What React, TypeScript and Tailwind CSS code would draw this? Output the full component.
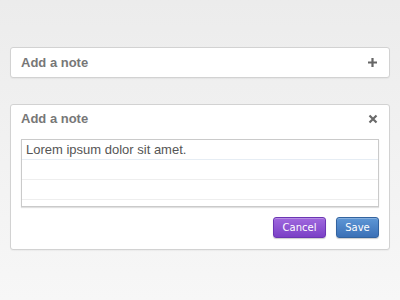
const lines = ["Lorem ipsum dolor sit amet.", "", ""];

function PlusIcon() {
  return (
    <svg width="11" height="11" viewBox="0 0 11 11" className="block">
      <path d="M5.5 1v9M1 5.5h9" stroke="#666" strokeWidth="2.2" />
    </svg>
  );
}

function CloseIcon() {
  return (
    <svg width="10" height="10" viewBox="0 0 10 10" className="block">
      <path d="M1.5 1.5l7 7M8.5 1.5l-7 7" stroke="#6a6a6a" strokeWidth="2.2" />
    </svg>
  );
}

export default function App() {
  return (
    <div className="w-[400px] h-[300px] bg-gradient-to-b from-[#ececec] to-[#f7f7f7] pt-[47px] px-[10px] font-['Liberation_Sans',Arial,sans-serif]">
      <div className="w-[380px] h-[31px] bg-white border border-[#d2d2d2] rounded-[3px] shadow-[0_1px_1px_rgba(0,0,0,0.04)] flex items-center justify-between pl-[10px] pr-[11px]">
        <span className="text-[13px] font-bold text-[#777]">Add a note</span>
        <PlusIcon />
      </div>

      <div className="mt-[26px] w-[380px] h-[146px] bg-white border border-[#d2d2d2] rounded-[3px] shadow-[0_1px_1px_rgba(0,0,0,0.04)] px-[10px] pt-[6px]">
        <div className="h-[16px] flex items-center justify-between pr-[1px]">
          <span className="text-[13px] font-bold text-[#777] leading-[16px]">Add a note</span>
          <CloseIcon />
        </div>
        <div className="mt-[12px] h-[68px] border border-[#cacaca] shadow-[0_1px_1px_rgba(0,0,0,0.12)]">
          {lines.map((text, i) => (
            <div
              key={i}
              className={`h-[20px] flex items-center pl-[4px] text-[13px] text-[#555] border-b ${
                i === 0 ? "border-[#e6edf4]" : "border-[#eeeeee]"
              }`}
            >
              {text}
            </div>
          ))}
        </div>
        <div className="mt-[10px] flex justify-end gap-[10px] font-['DejaVu_Sans',sans-serif] text-[10px] text-white">
          <button className="w-[53px] h-[21px] rounded-[3px] border border-[#6b36b3] bg-gradient-to-b from-[#a068de] to-[#7b40c6] shadow-[0_1px_1px_rgba(0,0,0,0.2),inset_0_1px_0_rgba(255,255,255,0.25)]">
            Cancel
          </button>
          <button className="w-[43px] h-[21px] rounded-[3px] border border-[#33639f] bg-gradient-to-b from-[#5e97d6] to-[#3b70b6] shadow-[0_1px_1px_rgba(0,0,0,0.2),inset_0_1px_0_rgba(255,255,255,0.25)]">
            Save
          </button>
        </div>
      </div>
    </div>
  );
}
